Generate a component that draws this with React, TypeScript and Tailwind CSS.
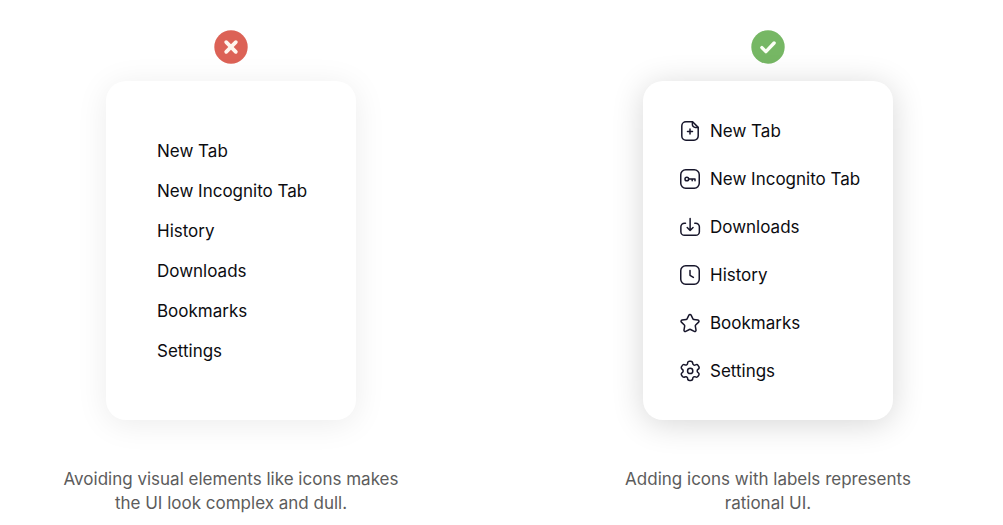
import type { ReactNode } from "react";

interface MenuItem {
  label: string;
  icon?: ReactNode;
}

function Icon({ children }: { children: ReactNode }) {
  return (
    <svg
      viewBox="0 0 24 24"
      className="size-6 shrink-0 text-[#17162b]"
      fill="none"
      stroke="currentColor"
      strokeWidth="1.5"
      strokeLinecap="round"
      strokeLinejoin="round"
      aria-hidden="true"
    >
      {children}
    </svg>
  );
}

const PLAIN_ITEMS: MenuItem[] = [
  { label: "New Tab" },
  { label: "New Incognito Tab" },
  { label: "History" },
  { label: "Downloads" },
  { label: "Bookmarks" },
  { label: "Settings" },
];

const ICON_ITEMS: MenuItem[] = [
  {
    label: "New Tab",
    icon: (
      <Icon>
        <path d="M14.6 2.75H8a4.2 4.2 0 0 0-4.2 4.2v10.1A4.2 4.2 0 0 0 8 21.25h8a4.2 4.2 0 0 0 4.2-4.2V8.4Z" />
        <path d="M14.4 2.9v2.6a2.9 2.9 0 0 0 2.9 2.9h2.7" />
        <path d="M12 10v5M9.5 12.5h5" />
      </Icon>
    ),
  },
  {
    label: "New Incognito Tab",
    icon: (
      <Icon>
        <rect x="2.75" y="2.75" width="18.5" height="18.5" rx="4.9" />
        <circle cx="8.84" cy="12" r="1.85" />
        <path d="M10.69 12h6.32v1.85M14.18 13.85V12" />
      </Icon>
    ),
  },
  {
    label: "Downloads",
    icon: (
      <Icon>
        <path d="M12.12 15.44V3.4M15.04 12.51l-2.92 2.93-2.91-2.93" />
        <path d="M16.76 8.13h.93a3.68 3.68 0 0 1 3.68 3.68v4.89a3.68 3.68 0 0 1-3.67 3.67H6.56a3.69 3.69 0 0 1-3.69-3.68V11.8a3.68 3.68 0 0 1 3.68-3.67h.94" />
      </Icon>
    ),
  },
  {
    label: "History",
    icon: (
      <Icon>
        <rect x="2.75" y="2.75" width="18.5" height="18.5" rx="4.9" />
        <path d="M12 7.6v4.7l3.4 2.1" />
      </Icon>
    ),
  },
  {
    label: "Bookmarks",
    icon: (
      <Icon>
        <path d="M13.1 4.18l1.83 3.65c.18.36.53.61.93.66l4.09.59c1.01.15 1.41 1.37.68 2.07l-2.96 2.84c-.29.28-.42.68-.35 1.08l.69 4.01c.18.99-.88 1.75-1.78 1.28l-3.66-1.9a1.24 1.24 0 0 0-1.14 0l-3.66 1.9c-.9.47-1.96-.29-1.78-1.28l.69-4.01c.07-.4-.06-.8-.35-1.08l-2.96-2.84c-.73-.7-.33-1.92.68-2.07l4.09-.59c.4-.05.75-.3.93-.66l1.83-3.65c.45-.91 1.75-.91 2.2 0Z" />
      </Icon>
    ),
  },
  {
    label: "Settings",
    icon: (
      <Icon>
        <path d="M20.81 7.62l-.63-1.08a1.91 1.91 0 0 0-2.6-.7 1.91 1.91 0 0 1-2.61-.68 1.9 1.9 0 0 1-.26-.91 1.91 1.91 0 0 0-1.91-1.97h-1.26a1.9 1.9 0 0 0-1.9 1.91 1.91 1.91 0 0 1-2.83 1.63 1.91 1.91 0 0 0-2.61.7l-.67 1.1a1.91 1.91 0 0 0 .7 2.61 1.91 1.91 0 0 1 0 3.32 1.9 1.9 0 0 0-.7 2.6l.64 1.08a1.91 1.91 0 0 0 2.6.75 1.9 1.9 0 0 1 2.6.69c.17.28.26.59.26.92 0 1.05.86 1.91 1.91 1.91h1.26a1.91 1.91 0 0 0 1.91-1.9 1.9 1.9 0 0 1 2.83-1.66 1.91 1.91 0 0 0 2.61-.7l.66-1.09a1.91 1.91 0 0 0-.7-2.61 1.91 1.91 0 0 1 0-3.31 1.91 1.91 0 0 0 .7-2.6Z" />
        <circle cx="12.18" cy="11.89" r="2.64" />
      </Icon>
    ),
  },
];

function WrongBadge() {
  return (
    <svg viewBox="0 0 34 34" className="size-[34px]" role="img" aria-label="Don't">
      <circle cx="17" cy="17" r="16.7" fill="#dc6256" />
      <path d="M12.2 12.2l9.6 9.6M21.8 12.2l-9.6 9.6" stroke="#fff6ee" strokeWidth="3.8" strokeLinecap="round" />
    </svg>
  );
}

function RightBadge() {
  return (
    <svg viewBox="0 0 34 34" className="size-[34px]" role="img" aria-label="Do">
      <circle cx="17" cy="17" r="16.7" fill="#76b764" />
      <path
        d="M10.9 17.6l4 4 8.2-8.6"
        fill="none"
        stroke="#fbfff5"
        strokeWidth="3.4"
        strokeLinecap="round"
        strokeLinejoin="round"
      />
    </svg>
  );
}

function MenuList({ items, className }: { items: MenuItem[]; className: string }) {
  return (
    <ul className={`flex w-[250px] flex-col rounded-[20px] bg-white ${className}`}>
      {items.map((item) => (
        <li key={item.label}>
          <button type="button" className="flex items-center gap-2 whitespace-nowrap text-[17px] leading-6 text-[#0c0c10]">
            {item.icon}
            {item.label}
          </button>
        </li>
      ))}
    </ul>
  );
}

function Example({ badge, caption, children }: { badge: ReactNode; caption: string; children: ReactNode }) {
  return (
    <section className="flex flex-col items-center">
      {badge}
      <div className="mt-[17px]">{children}</div>
      <p className="mt-[47px] max-w-[350px] text-center text-[17px] leading-6 text-[#5c5c5c]">{caption}</p>
    </section>
  );
}

export default function App() {
  return (
    <main className="grid grid-cols-2 gap-x-[75px] bg-white pt-[30px] pr-1 pb-2 font-['Inter',sans-serif]">
      <Example badge={<WrongBadge />} caption="Avoiding visual elements like icons makes the UI look complex and dull.">
        <MenuList
          items={PLAIN_ITEMS}
          className="gap-4 pt-[58px] pb-[57px] pl-[51px] shadow-[0_4px_32px_rgba(0,0,0,0.08)]"
        />
      </Example>
      <Example badge={<RightBadge />} caption="Adding icons with labels represents rational UI.">
        <MenuList
          items={ICON_ITEMS}
          className="gap-6 pt-[38px] pb-[37px] pl-[35px] shadow-[0_4px_32px_rgba(0,0,0,0.16)]"
        />
      </Example>
    </main>
  );
}
